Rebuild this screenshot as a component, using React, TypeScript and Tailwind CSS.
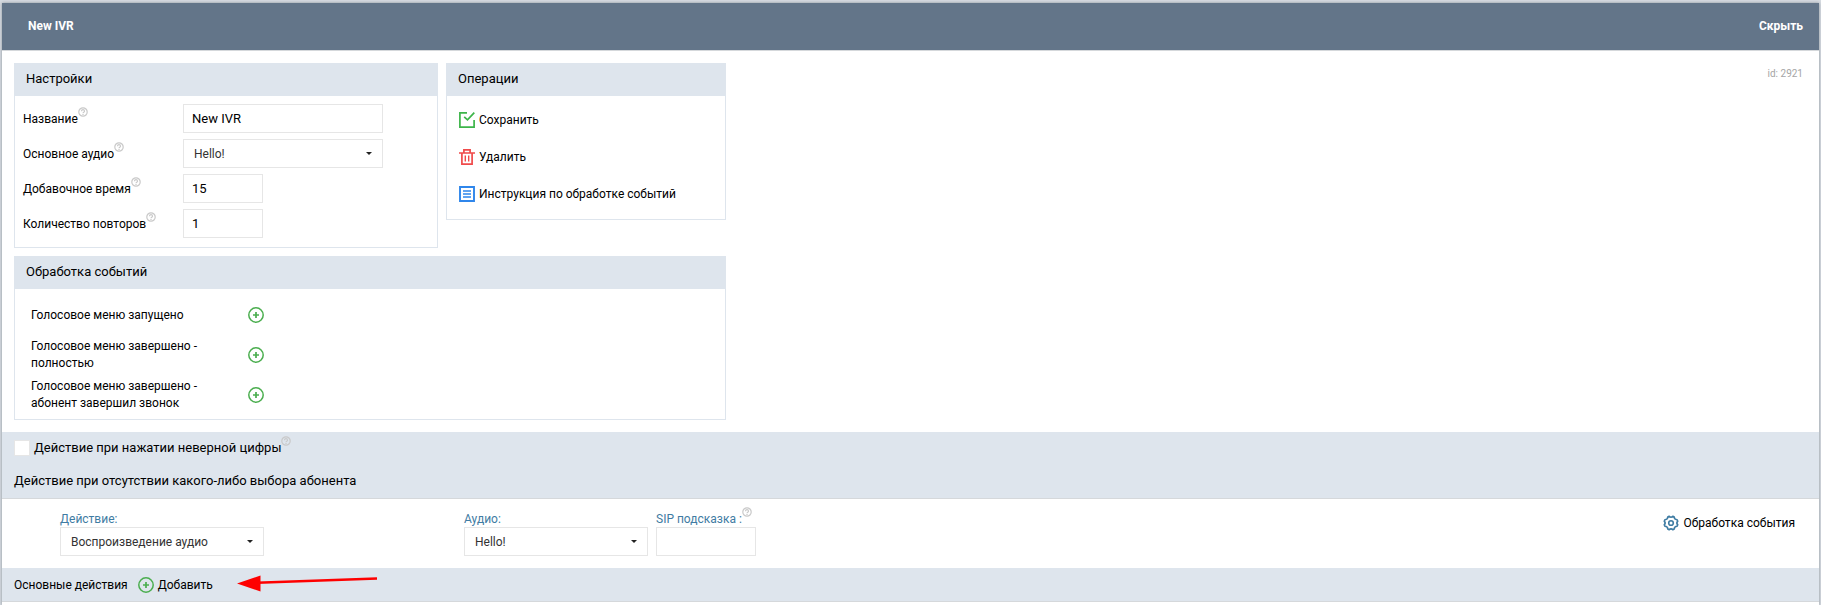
import type { ReactNode } from "react";

const Hint = () => (
  <svg className="size-[10px] -mt-1 shrink-0" viewBox="0 0 10 10" fill="none" stroke="#c9c9c9" strokeWidth="1.2">
    <circle cx="5" cy="5" r="4.2" />
    <path d="M3.500 4.200c0-2 3-2 3 0 0 1-1.500 1-1.500 2M5 7v1" />
  </svg>
);

const PlusIcon = () => (
  <svg className="size-4 shrink-0" viewBox="0 0 16 16" fill="none" stroke="#4bae4f" strokeWidth="1.5">
    <circle cx="8" cy="8" r="7.200" />
    <path d="M8 5v6M5 8h6" strokeWidth="1.700" />
  </svg>
);

const SaveIcon = () => (
  <svg className="size-4 shrink-0" viewBox="0 0 16 16" fill="none" stroke="#3db54a" strokeWidth="1.7">
    <path d="M8 .9H.9v14.200h14.200V8" />
    <path d="M5.200 4.800l3.300 3L15.300.7" />
  </svg>
);

const TrashIcon = () => (
  <svg className="size-4 shrink-0" viewBox="0 0 16 16" fill="none" stroke="#f04b4b" strokeWidth="1.7">
    <path d="M0 4h16M4.900 4V.9h6.200V4M2.900 4v11.100h10.200V4" />
    <path d="M6.300 6.500v6M9.700 6.500v6" strokeWidth="1.400" />
  </svg>
);

const ListIcon = () => (
  <svg className="size-4 shrink-0" viewBox="0 0 16 16" fill="none" stroke="#2f86eb" strokeWidth="1.9">
    <path d="M1 1h14v14H1z" />
    <path d="M4 5h8M4 8h8M4 11h8" strokeWidth="1.500" />
  </svg>
);

const GearIcon = () => (
  <svg className="size-4 shrink-0" viewBox="0 0 16 16" fill="none" stroke="#3f7ca3" strokeWidth="1.6">
    <circle cx="8" cy="8" r="2.300" />
    <path d="M6.100 1.300Q8 3 9.900 1.300L11.200 2q.2 2.500 2.800 2.700l.7 1.400Q13 8 14.700 9.900L14 11.300q-2.600.2-2.800 2.700l-1.300.7Q8 13 6.100 14.700L4.800 14Q4.600 11.500 2 11.300L1.300 9.900Q3 8 1.300 6.100L2 4.700Q4.600 4.500 4.800 2z" />
  </svg>
);

interface PanelProps {
  title: string;
  className?: string;
  children: ReactNode;
}

const Panel = ({ title, className = "", children }: PanelProps) => (
  <section className={`border border-[#dee5ed] ${className}`}>
    <h2 className="bg-[#dee5ed] h-8 px-[11px] pb-[2px] flex items-center text-[13px]">{title}</h2>
    {children}
  </section>
);

interface SelectProps {
  id: string;
  value: string;
  className: string;
}

const Select = ({ id, value, className }: SelectProps) => (
  <div className={`relative ${className}`}>
    <select
      id={id}
      className="appearance-none w-full h-[29px] border border-[#e6e6e6] bg-white pl-[10px] pr-6 text-[12px] text-[#333] outline-none"
    >
      <option>{value}</option>
    </select>
    <svg className="absolute right-[11px] top-[13px] w-[6px] h-[3px] pointer-events-none" viewBox="0 0 6 3">
      <path d="M0 0h6L3 3z" fill="#222" />
    </svg>
  </div>
);

interface FieldProps {
  id: string;
  label: string;
  children: ReactNode;
}

const Field = ({ id, label, children }: FieldProps) => (
  <div className="flex items-center">
    <div className="w-40 flex items-start">
      <label htmlFor={id} className="text-[12px] leading-4">
        {label}
      </label>
      <Hint />
    </div>
    {children}
  </div>
);

const inputClass = "h-[29px] border border-[#e6e6e6] bg-white px-2 text-[13px] outline-none";

const events = [
  "Голосовое меню запущено",
  "Голосовое меню завершено - полностью",
  "Голосовое меню завершено - абонент завершил звонок",
];

const operations = [
  { label: "Сохранить", icon: <SaveIcon /> },
  { label: "Удалить", icon: <TrashIcon /> },
  { label: "Инструкция по обработке событий", icon: <ListIcon /> },
];

const App = () => {
  return (
    <div className="min-h-screen bg-[#d6dbe1] px-[2px] pt-[3px] flex flex-col font-['Roboto','Liberation_Sans',sans-serif] text-black">
      <div className="bg-white flex-1 shadow-[0_0_3px_#8a9098]">
        <header className="h-12 bg-[#637589] border-b border-[#d5d8db] pl-[26px] pr-4 pb-[2px] flex items-center justify-between text-white text-[12px] font-bold">
          <h1>New IVR</h1>
          <button className="font-bold">Скрыть</button>
        </header>

        <div className="flex items-start justify-between pt-3 pb-3 pl-3 pr-4">
          <div className="w-[712px] flex flex-col gap-2">
            <div className="flex items-start gap-2">
              <Panel title="Настройки" className="w-[424px]">
                <div className="flex flex-col gap-[6px] px-2 pt-2 pb-[9px]">
                  <Field id="name" label="Название">
                    <input id="name" className={`${inputClass} w-[200px]`} defaultValue="New IVR" />
                  </Field>
                  <Field id="audio" label="Основное аудио">
                    <Select id="audio" value="Hello!" className="w-[200px]" />
                  </Field>
                  <Field id="extra" label="Добавочное время">
                    <input id="extra" className={`${inputClass} w-20`} defaultValue="15" />
                  </Field>
                  <Field id="repeat" label="Количество повторов">
                    <input id="repeat" className={`${inputClass} w-20`} defaultValue="1" />
                  </Field>
                </div>
              </Panel>

              <Panel title="Операции" className="flex-1">
                <div className="flex flex-col items-start gap-[21px] px-3 pt-4 pb-[17px]">
                  {operations.map((op) => (
                    <button key={op.label} className="flex items-center gap-1 text-[12px] leading-4">
                      {op.icon}
                      {op.label}
                    </button>
                  ))}
                </div>
              </Panel>
            </div>

            <Panel title="Обработка событий">
              <div className="pl-4 pt-[6px] pb-1">
                {events.map((event) => (
                  <div key={event} className="h-10 flex items-center">
                    <p className="w-[217px] pr-9 text-[12px] leading-[17px]">{event}</p>
                    <button aria-label="Добавить">
                      <PlusIcon />
                    </button>
                  </div>
                ))}
              </div>
            </Panel>
          </div>
          <span className="text-[10px] leading-[22px] text-[#a5a5a5]">id: 2921</span>
        </div>

        <div className="bg-[#dee5ed] border-b border-[#d5d8db] px-3 text-[13px]">
          <div className="h-8 flex items-center">
            <input
              id="wrong"
              type="checkbox"
              className="appearance-none size-4 bg-white border border-[#e6e6e6] checked:bg-[#637589]"
            />
            <div className="flex items-start pl-1">
              <label htmlFor="wrong" className="leading-4">
                Действие при нажатии неверной цифры
              </label>
              <Hint />
            </div>
          </div>
          <h2 className="h-[34px] flex items-center">Действие при отсутствии какого-либо выбора абонента</h2>
        </div>

        <div className="flex items-start pl-[58px] pr-6 pt-3 pb-3 text-[12px]">
          <div className="w-[404px]">
            <label htmlFor="action" className="block leading-4 text-[#3f7ca3]">
              Действие:
            </label>
            <Select id="action" value="Воспроизведение аудио" className="w-[204px]" />
          </div>
          <div className="w-48">
            <label htmlFor="audio2" className="block leading-4 text-[#3f7ca3]">
              Аудио:
            </label>
            <Select id="audio2" value="Hello!" className="w-[184px]" />
          </div>
          <div>
            <div className="flex items-start">
              <label htmlFor="sip" className="leading-4 text-[#3f7ca3]">
                SIP подсказка :
              </label>
              <Hint />
            </div>
            <input id="sip" className={`${inputClass} w-[100px] block`} />
          </div>
          <button className="ml-auto mt-1 flex items-center gap-1 leading-4">
            <GearIcon />
            Обработка события
          </button>
        </div>

        <div className="h-[34px] bg-[#dee5ed] border-b border-[#d5d8db] px-3 flex items-center text-[12px]">
          <h2>Основные действия</h2>
          <button className="flex items-center gap-1 pl-[10px]">
            <PlusIcon />
            Добавить
          </button>
          <svg className="ml-6 w-[141px] h-5" viewBox="0 0 141 20">
            <path d="M20 7.800L140 3.500" stroke="#fe0000" strokeWidth="2.500" />
            <path d="M0 8.500L23.500.5v16z" fill="#fe0000" />
          </svg>
        </div>
      </div>
    </div>
  );
};

export default App;
